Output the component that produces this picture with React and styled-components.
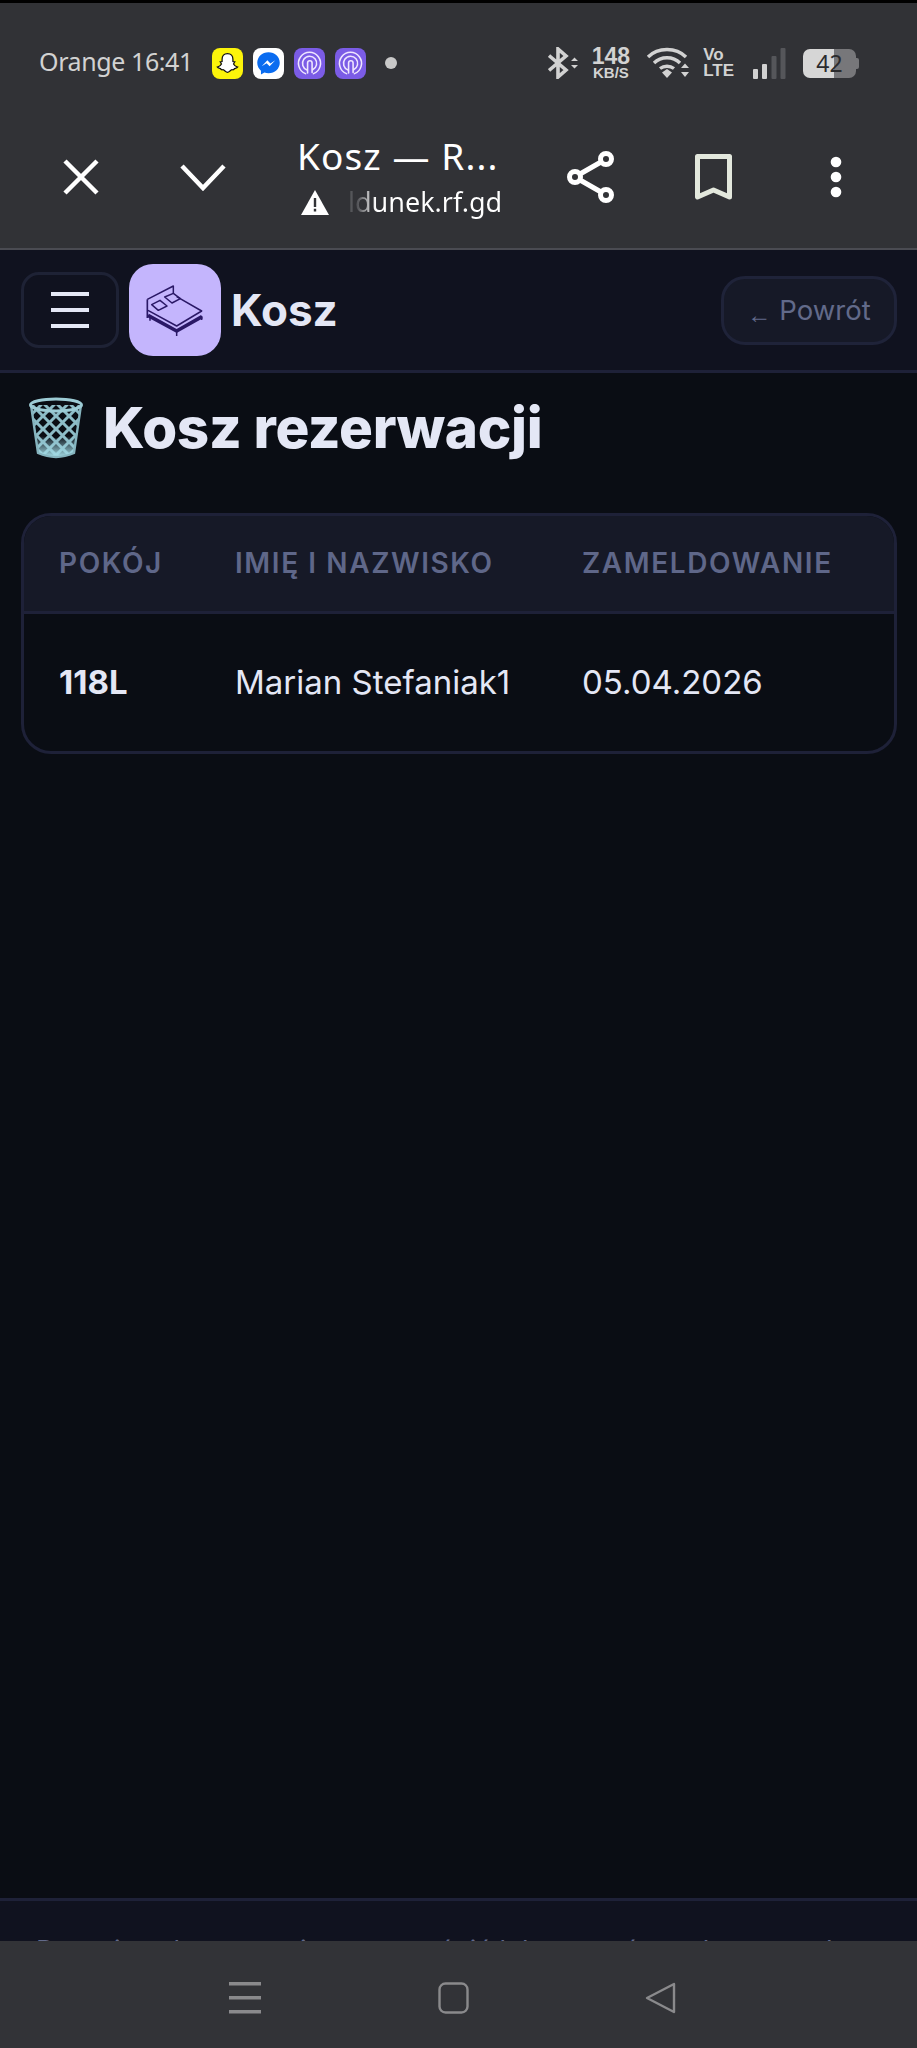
import React from "react";
import styled, { createGlobalStyle } from "styled-components";

const GlobalStyle = createGlobalStyle`
  html, body {
    margin: 0;
    padding: 0;
    background: #0a0d14;
  }
  * {
    box-sizing: border-box;
  }
`;

const Screen = styled.div`
  width: 917px;
  height: 2048px;
  display: flex;
  flex-direction: column;
  overflow: hidden;
  background: #0a0d14;
  font-family: Inter, "Liberation Sans", sans-serif;
  color: #e4e7f5;
`;

const PhoneTop = styled.div`
  flex: none;
  background: #313236;
  border-top: 3px solid #000;
  border-bottom: 2px solid #4a4b52;
`;

const StatusBar = styled.div`
  height: 120px;
  display: flex;
  align-items: center;
  justify-content: space-between;
  padding: 0 61px 0 39px;
`;

const StatusGroup = styled.div`
  display: flex;
  align-items: center;
`;

const Carrier = styled.span`
  font-family: "Noto Sans", sans-serif;
  font-size: 25px;
  letter-spacing: -0.4px;
  color: #d2d2d2;
  width: 173px;
  margin-top: -4px;
  white-space: nowrap;
`;

const NotifIcon = styled.div`
  width: 31px;
  height: 31px;
  margin-right: 10px;
  border-radius: 8px;
  background: ${(p) => p.$bg};
  display: flex;
  align-items: center;
  justify-content: center;
`;

const Dot = styled.div`
  width: 12px;
  height: 12px;
  margin-left: 9px;
  border-radius: 50%;
  background: #c9c9c9;
`;

const Speed = styled.div`
  margin: 0 16px 0 13px;
  text-align: center;
  font-family: "Liberation Sans", sans-serif;
  font-weight: 700;
  font-size: 23px;
  line-height: 19px;
  color: #d2d2d2;
  small {
    display: block;
    font-size: 15px;
    line-height: 14px;
  }
`;

const VoLte = styled.div`
  margin: 0 19px 0 13px;
  text-align: left;
  font-family: "Liberation Sans", sans-serif;
  font-weight: 700;
  font-size: 17px;
  line-height: 16px;
  color: #d2d2d2;
`;

const Battery = styled.div`
  position: relative;
  width: 53px;
  height: 29px;
  margin-left: 17px;
  border-radius: 7px;
  background: linear-gradient(90deg, #d6d6d6 0 58%, #77777a 58% 100%);
  color: #2b2b2e;
  font-family: "Noto Sans", sans-serif;
  font-size: 23px;
  line-height: 29px;
  text-align: center;
  &::after {
    content: "";
    position: absolute;
    right: -3px;
    top: 9px;
    width: 3px;
    height: 11px;
    border-radius: 0 2px 2px 0;
    background: #77777a;
  }
`;

const BrowserBar = styled.div`
  height: 125px;
  padding: 0 20px 17px;
  display: grid;
  grid-template-columns: 122px 122px 266px 122px 123px 122px;
  align-items: center;
  justify-items: center;
`;

const TitleBox = styled.div`
  justify-self: start;
  padding-left: 33px;
  color: #fff;
  font-family: "Noto Sans", sans-serif;
`;

const PageTitle = styled.div`
  font-size: 37px;
  line-height: 44px;
  letter-spacing: 1.1px;
  white-space: nowrap;
`;

const UrlRow = styled.div`
  display: flex;
  align-items: center;
  gap: 19px;
  margin-top: 6px;
  padding-left: 4px;
  font-size: 27px;
  line-height: 36px;
  white-space: nowrap;
`;

const UrlFade = styled.span`
  background: linear-gradient(90deg, #55565a 0 10px, #fff 28px);
  -webkit-background-clip: text;
  background-clip: text;
  color: transparent;
`;

const AppHeader = styled.header`
  flex: none;
  height: 123px;
  display: flex;
  align-items: center;
  padding: 0 20px 0 21px;
  background: #10121f;
  border-bottom: 3px solid #1e2138;
`;

const MenuButton = styled.button`
  width: 98px;
  height: 76px;
  margin-right: 10px;
  padding: 0;
  display: flex;
  flex-direction: column;
  align-items: center;
  justify-content: center;
  gap: 12px;
  background: #10121f;
  border: 3px solid #1e2235;
  border-radius: 18px;
  span {
    display: block;
    width: 38px;
    height: 4px;
    background: #e4e7f5;
  }
`;

const LogoTile = styled.div`
  width: 92px;
  height: 92px;
  margin-right: 10px;
  border-radius: 24px;
  background: #c4b5fd;
`;

const AppTitle = styled.div`
  flex: 1;
  font-size: 44px;
  font-weight: 700;
  line-height: 54px;
`;

const BackButton = styled.button`
  width: 176px;
  height: 69px;
  padding: 0;
  background: #161927;
  border: 3px solid #1f2339;
  border-radius: 24px;
  color: #626a8a;
  font-family: Inter, "Liberation Sans", sans-serif;
  font-size: 27.5px;
  white-space: nowrap;
`;

const BackArrow = styled.span`
  font-family: "Liberation Sans", sans-serif;
  font-size: 24px;
  margin-right: 8px;
  position: relative;
  top: 3px;
`;

const Main = styled.main`
  flex: 1;
  padding: 10px 20px 0 21px;
`;

const Heading = styled.h1`
  margin: 0 0 41px;
  height: 89px;
  display: flex;
  align-items: center;
  gap: 19px;
  padding-left: 7px;
  font-size: 56.5px;
  font-weight: 800;
  letter-spacing: -0.3px;
  color: #e4e7f5;
`;

const TableWrap = styled.div`
  border: 3px solid #1e2138;
  border-radius: 30px;
  overflow: hidden;
`;

const Table = styled.table`
  width: 100%;
  border-collapse: collapse;
  table-layout: fixed;
`;

const HeadCell = styled.th`
  height: 96px;
  width: ${(p) => p.$w};
  padding: 0 0 0 35px;
  background: #161927;
  border-bottom: 3px solid #1e2138;
  text-align: left;
  font-size: 28px;
  font-weight: 600;
  letter-spacing: 1.6px;
  text-transform: uppercase;
  white-space: nowrap;
  color: #5f6789;
`;

const Cell = styled.td`
  height: 139px;
  padding: 0 0 0 35px;
  font-size: 33px;
  font-weight: ${(p) => (p.$bold ? 700 : 400)};
  color: #e4e7f5;
  white-space: nowrap;
`;

const Footer = styled.footer`
  flex: none;
  height: 43px;
  overflow: hidden;
  padding: 32px 36px 0;
  background: #10121f;
  border-top: 3px solid #1e2138;
  color: #626a8a;
  font-size: 27px;
  line-height: 36px;
  white-space: nowrap;
`;

const NavBar = styled.nav`
  flex: none;
  height: 107px;
  padding: 41px 241px 0 229px;
  display: flex;
  align-items: flex-start;
  justify-content: space-between;
  background: #323337;
`;

const BedIcon = () => (
  <svg width="92" height="92" viewBox="27 24 276 276" fill="none" stroke="#2a1866" strokeWidth="4.5" strokeLinejoin="round">
    <path d="M82 130 160 90V112" />
    <path d="M82 130V186" strokeWidth="5" />
    <path d="M84 163 170 210 245 165 170 122" />
    <path d="M95 146 120 133 141 150 115 163Z" />
    <path d="M134 123 160 112 181 128 156 141Z" />
    <path d="M84 178 170 225 246 182" strokeWidth="11" />
    <path d="M170 222V240M245 180V192M90 182V194" />
  </svg>
);

const TrashIcon = () => (
  <svg width="56" height="62" viewBox="0 0 56 62">
    <defs>
      <pattern id="mesh" width="13" height="13" patternUnits="userSpaceOnUse" patternTransform="translate(2 6)">
        <path d="M-1 -1 14 14M14 -1 -1 14" stroke="#8dbcc7" strokeWidth="3" />
      </pattern>
      <linearGradient id="glow" x1="0" y1="0" x2="0" y2="1">
        <stop offset="0" stopColor="#8fc6d2" stopOpacity="0" />
        <stop offset="1" stopColor="#a6dfe9" />
      </linearGradient>
    </defs>
    <path d="M3 8 10 56Q28 64 46 56L53 8Z" fill="url(#mesh)" />
    <path d="M7 38 10 56Q28 64 46 56L49 38Q28 44 7 38Z" fill="url(#glow)" />
    <path d="M3 8 10 56Q28 64 46 56L53 8" fill="none" stroke="#86b4bf" strokeWidth="2.4" />
    <ellipse cx="28" cy="8" rx="25.5" ry="6" fill="none" stroke="#9ccbd5" strokeWidth="3" />
  </svg>
);

const GhostIcon = () => (
  <svg width="25" height="25" viewBox="0 0 24 24" fill="#fff" stroke="#111" strokeWidth="1.2">
    <path d="M12 2.500c3.400 0 5.200 2.500 5.200 5.300v2.300l1.800.3-1.200 2c.7 1.500 2 2.500 4 3-.6 1.200-2 1.200-3 1.500-.4 1-.8 1.300-2 1.100-1.700-.2-3 2.500-4.800 2.500s-3.100-2.700-4.800-2.500c-1.200.2-1.600-.1-2-1.100-1-.3-2.400-.3-3-1.500 2-.5 3.300-1.500 4-3l-1.200-2 1.800-.3V7.800c0-2.800 1.800-5.300 5.200-5.300z" />
  </svg>
);

const MessengerIcon = () => (
  <svg width="27" height="27" viewBox="0 0 24 24">
    <path d="M12 2C6.300 2 2 6.100 2 11.400c0 2.900 1.300 5.300 3.300 7v3.400l3.100-1.700c1.100.3 2.300.5 3.600.5 5.700 0 10-4.100 10-9.300S17.700 2 12 2z" fill="#0a6cf0" />
    <path d="M6 14.500 11 9.200l2.700 2.700 4.300-2.700-5 5.300-2.700-2.700z" fill="#fff" />
  </svg>
);

const RingsIcon = () => (
  <svg width="27" height="27" viewBox="0 0 24 24" fill="none" stroke="#efe6ff" strokeWidth="1.4" strokeLinecap="round">
    <path d="M8.500 21A9.800 9.800 0 1 1 15.500 21" />
    <path d="M9.800 17.800A6.300 6.300 0 1 1 14.800 17.600" />
    <path d="M10.300 20.500V11.500a2 2 0 0 1 4 0V20" />
  </svg>
);

const BluetoothIcon = () => (
  <svg width="31" height="32" viewBox="0 0 31 32" fill="none" stroke="#d2d2d2" strokeWidth="3.6">
    <path d="M1 8.500 18 23 10 30V2l8 7L1 23.500" />
    <path d="M23 14 26.500 10.500 30 14ZM23 18 26.500 21.500 30 18Z" fill="#d2d2d2" stroke="none" />
  </svg>
);

const WifiIcon = () => (
  <svg width="44" height="32" viewBox="0 0 44 32" fill="none" stroke="#d2d2d2" strokeWidth="3.4">
    <path d="M2 10C12 0 30 0 40 10M8 16C15 9 27 9 34 16M14 21.500C18 18.500 24 18.500 28 21.500" />
    <path d="M16 25.500 21 22 26 25.500 21 31ZM35 21 39 16.500 43 21ZM35 25 39 30 43 25Z" fill="#d2d2d2" stroke="none" />
  </svg>
);

const SignalIcon = () => (
  <svg width="33" height="31" viewBox="0 0 33 31">
    <rect x="0" y="21" width="5" height="10" rx="1" fill="#d2d2d2" />
    <rect x="9" y="16" width="5" height="15" rx="1" fill="#d2d2d2" />
    <rect x="18.500" y="8" width="5" height="23" rx="1" fill="#55565a" />
    <rect x="27.500" y="0" width="5" height="31" rx="1" fill="#55565a" />
  </svg>
);

const CloseIcon = () => (
  <svg width="36" height="36" viewBox="0 0 36 36" stroke="#fff" strokeWidth="4.5">
    <path d="M2 2 34 34M34 2 2 34" />
  </svg>
);

const ChevronIcon = () => (
  <svg width="46" height="28" viewBox="0 0 46 28" fill="none" stroke="#fff" strokeWidth="4.5">
    <path d="M2 3 23 25 44 3" />
  </svg>
);

const WarnIcon = () => (
  <svg width="28" height="25" viewBox="0 0 28 25">
    <path d="M14 0 28 25H0Z" fill="#fff" />
    <path d="M12.800 8h2.400v9h-2.400zM12.800 18.800h2.400v2.600h-2.400z" fill="#313236" />
  </svg>
);

const ShareIcon = () => (
  <svg width="48" height="52" viewBox="0 0 48 52" fill="none" stroke="#fff" strokeWidth="5">
    <circle cx="8" cy="26" r="5.500" />
    <circle cx="39" cy="8" r="5.500" />
    <circle cx="39" cy="44" r="5.500" />
    <path d="M13 23 34 11M13 29 34 41" />
  </svg>
);

const BookmarkIcon = () => (
  <svg width="37" height="47" viewBox="0 0 37 47" fill="none" stroke="#e3e8dd" strokeWidth="5" strokeLinejoin="round">
    <path d="M2.500 2.500H34.500V43L18.500 36 2.500 43Z" />
  </svg>
);

const DotsIcon = () => (
  <svg width="12" height="42" viewBox="0 0 12 42" fill="#fff">
    <circle cx="6" cy="6" r="5.300" />
    <circle cx="6" cy="21" r="5.300" />
    <circle cx="6" cy="36" r="5.300" />
  </svg>
);

const NavMenuIcon = () => (
  <svg width="32" height="32" viewBox="0 0 32 32" fill="#8a8a8c">
    <rect y="0" width="32" height="3.500" />
    <rect y="14" width="32" height="3.500" />
    <rect y="28" width="32" height="3.500" />
  </svg>
);

const NavHomeIcon = () => (
  <svg width="31" height="32" viewBox="0 0 31 32" fill="none" stroke="#8a8a8c" strokeWidth="2.4">
    <rect x="1.500" y="1.500" width="28" height="29" rx="6" />
  </svg>
);

const NavBackIcon = () => (
  <svg width="31" height="32" viewBox="0 0 31 32" fill="none" stroke="#8a8a8c" strokeWidth="2.4" strokeLinejoin="round">
    <path d="M29 2 2 16 29 30Z" />
  </svg>
);

const App = () => {
  return (
    <Screen>
      <GlobalStyle />
      <PhoneTop>
        <StatusBar>
          <StatusGroup>
            <Carrier>Orange 16:41</Carrier>
            <NotifIcon $bg="#fcf40a"><GhostIcon /></NotifIcon>
            <NotifIcon $bg="#fff"><MessengerIcon /></NotifIcon>
            <NotifIcon $bg="#7b5ce6"><RingsIcon /></NotifIcon>
            <NotifIcon $bg="#7b5ce6"><RingsIcon /></NotifIcon>
            <Dot />
          </StatusGroup>
          <StatusGroup>
            <BluetoothIcon />
            <Speed>148<small>KB/S</small></Speed>
            <WifiIcon />
            <VoLte>Vo<br />LTE</VoLte>
            <SignalIcon />
            <Battery>42</Battery>
          </StatusGroup>
        </StatusBar>
        <BrowserBar>
          <CloseIcon />
          <ChevronIcon />
          <TitleBox>
            <PageTitle>Kosz — R...</PageTitle>
            <UrlRow>
              <WarnIcon />
              <UrlFade>ldunek.rf.gd</UrlFade>
            </UrlRow>
          </TitleBox>
          <ShareIcon />
          <BookmarkIcon />
          <DotsIcon />
        </BrowserBar>
      </PhoneTop>

      <AppHeader>
        <MenuButton>
          <span />
          <span />
          <span />
        </MenuButton>
        <LogoTile><BedIcon /></LogoTile>
        <AppTitle>Kosz</AppTitle>
        <BackButton><BackArrow>←</BackArrow>Powrót</BackButton>
      </AppHeader>

      <Main>
        <Heading>
          <TrashIcon />
          Kosz rezerwacji
        </Heading>
        <TableWrap>
          <Table>
            <thead>
              <tr>
                <HeadCell $w="176px">Pokój</HeadCell>
                <HeadCell $w="347px">Imię i nazwisko</HeadCell>
                <HeadCell>Zameldowanie</HeadCell>
              </tr>
            </thead>
            <tbody>
              <tr>
                <Cell $bold>118L</Cell>
                <Cell>Marian Stefaniak1</Cell>
                <Cell>05.04.2026</Cell>
              </tr>
            </tbody>
          </Table>
        </TableWrap>
      </Main>

      <Footer>Pozycje w koszu można przywrócić lub usunąć trwale w panelu</Footer>
      <NavBar>
        <NavMenuIcon />
        <NavHomeIcon />
        <NavBackIcon />
      </NavBar>
    </Screen>
  );
};

export default App;
